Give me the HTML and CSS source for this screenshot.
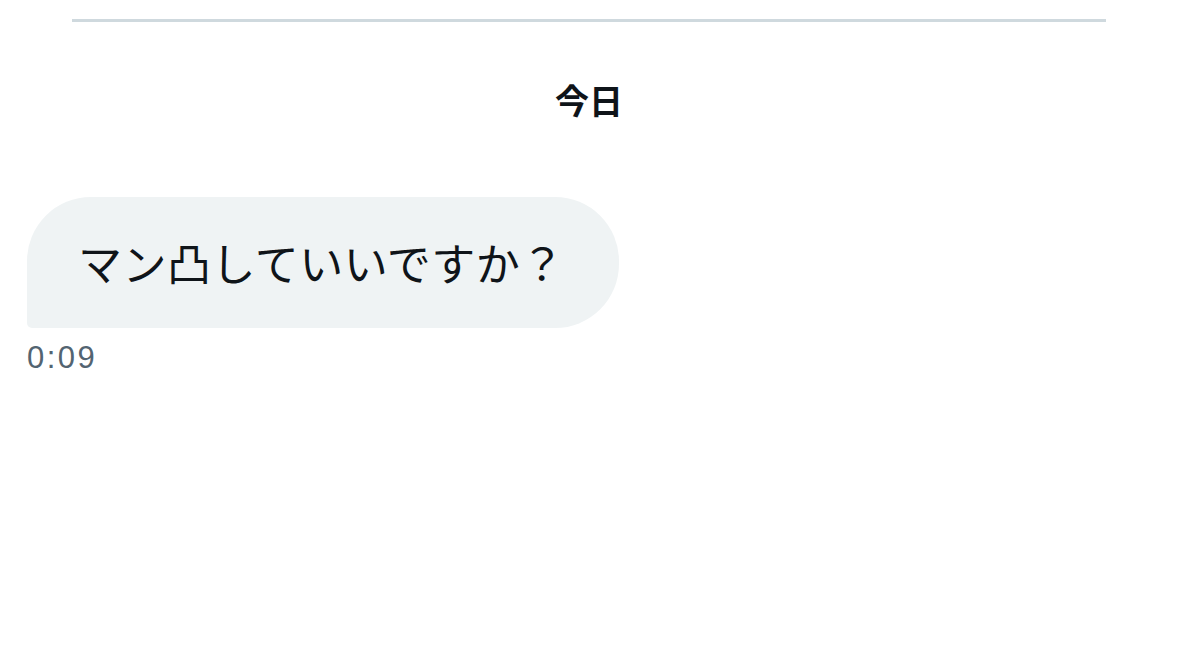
FILE: index.html
```html
<!DOCTYPE html>
<html lang="ja">
<head>
    <meta charset="UTF-8">
    <meta name="viewport" content="width=device-width, initial-scale=1.0">
    <title>メッセージ</title>
    <link rel="stylesheet" href="styles.css">
</head>
<body>
    <div class="thread">
        <div class="divider"></div>

        <div class="day-label">今日</div>

        <div class="message received">
            <div class="bubble">マン凸していいですか？</div>
            <div class="time">0:09</div>
        </div>
    </div>
</body>
</html>
```

FILE: styles.css
```css
:root {
    --text: #0f1419;
    --muted: #536471;
    --bubble: #eff3f4;
    --border: #cfd9de;
}

* {
    margin: 0;
    padding: 0;
    box-sizing: border-box;
}

body {
    background: #ffffff;
    color: var(--text);
    font-family: "Noto Sans CJK JP", "Noto Sans", sans-serif;
    min-height: 100vh;
}

.thread {
    display: flex;
    flex-direction: column;
}

.divider {
    height: 3px;
    background: var(--border);
    margin: 19px 72px 0;
}

.day-label {
    text-align: center;
    font-size: 34px;
    font-weight: 700;
    line-height: 48px;
    margin-top: 54px;
}

.message {
    display: flex;
    flex-direction: column;
    align-items: flex-start;
    padding-left: 27px;
    margin-top: 73px;
}

.bubble {
    background: var(--bubble);
    font-size: 44px;
    line-height: 61px;
    padding: 35px 54px 35px 51px;
    border-radius: 64px 64px 64px 5px;
    letter-spacing: 0.5px;
}

.time {
    font-family: "Liberation Sans", "Noto Sans", sans-serif;
    font-size: 31px;
    line-height: 40px;
    color: var(--muted);
    letter-spacing: 2.5px;
    margin-top: 10px;
}
```
